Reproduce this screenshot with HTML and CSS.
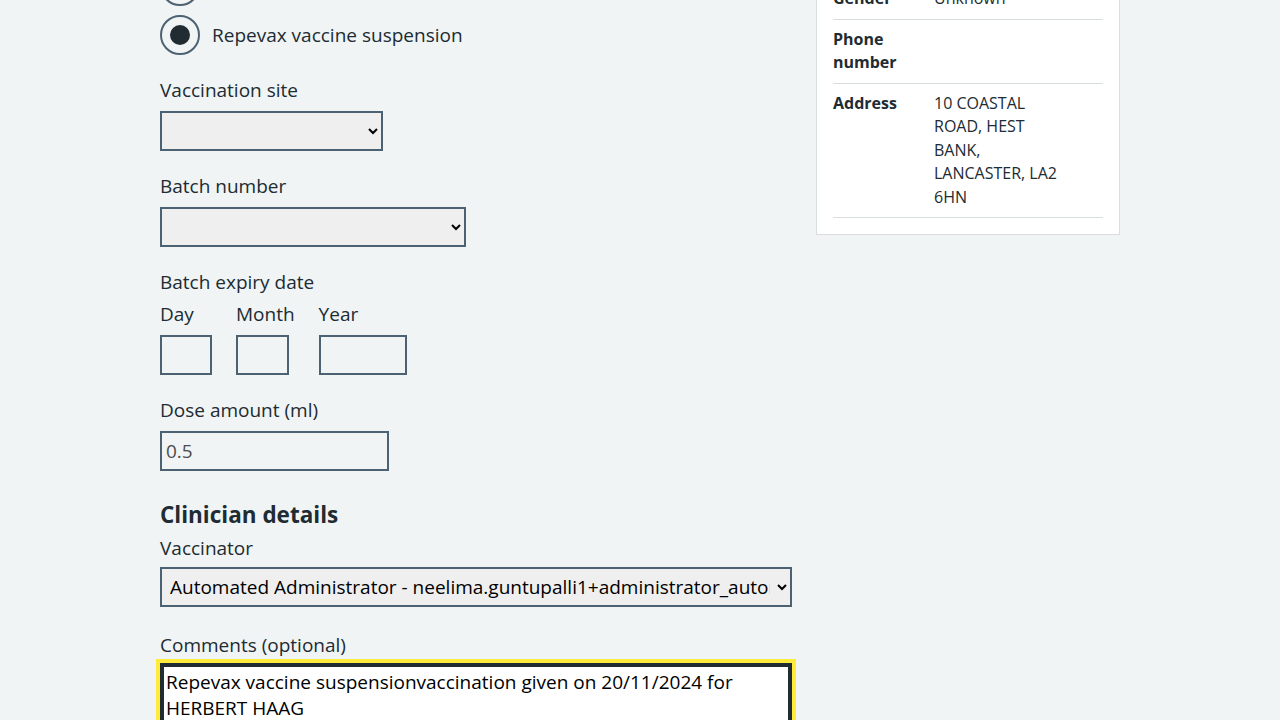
FILE: index.html
```html
<!DOCTYPE html>
<html lang="en">
<head>
<meta charset="utf-8">
<title>Record vaccination</title>
<link rel="stylesheet" href="styles.css">
</head>
<body>
<main class="container">
  <div class="main-col">
    <div class="form-group">
      <p class="label">Vaccine</p>
      <div class="radios">
        <label class="radio"><input class="radio-input" type="radio" name="vaccine"><span class="radio-label">Boostrix-IPV suspension for injection</span></label>
        <label class="radio"><input class="radio-input" type="radio" name="vaccine"><span class="radio-label">Adacel vaccine suspension</span></label>
        <label class="radio"><input class="radio-input" type="radio" name="vaccine" checked><span class="radio-label">Repevax vaccine suspension</span></label>
      </div>
    </div>

    <div class="form-group">
      <label class="label" for="site">Vaccination site</label>
      <select class="select select-site" id="site"><option></option></select>
    </div>

    <div class="form-group">
      <label class="label" for="batch">Batch number</label>
      <select class="select select-batch" id="batch"><option></option></select>
    </div>

    <div class="form-group">
      <p class="label label-legend">Batch expiry date</p>
      <div class="date-input">
        <div class="date-item">
          <label class="label" for="day">Day</label>
          <input class="input input-day" id="day" type="text">
        </div>
        <div class="date-item">
          <label class="label" for="month">Month</label>
          <input class="input input-month" id="month" type="text">
        </div>
        <div class="date-item">
          <label class="label" for="year">Year</label>
          <input class="input input-year" id="year" type="text">
        </div>
      </div>
    </div>

    <div class="form-group form-group-last">
      <label class="label" for="dose">Dose amount (ml)</label>
      <input class="input input-dose" id="dose" type="text" value="0.5">
    </div>

    <h2 class="heading">Clinician details</h2>
    <div class="form-group form-group-vaccinator">
      <label class="label label-tight" for="vaccinator">Vaccinator</label>
      <select class="select select-vaccinator" id="vaccinator">
        <option>Automated Administrator - neelima.guntupalli1+administrator_automation@nhs.net</option>
      </select>
    </div>

    <div class="form-group">
      <label class="label label-comments" for="comments">Comments (optional)</label>
      <textarea class="textarea" id="comments" rows="5">Repevax vaccine suspensionvaccination given on 20/11/2024 for HERBERT HAAG</textarea>
    </div>
  </div>

  <aside class="side-col">
    <div class="card">
      <dl class="summary">
        <div class="summary-row">
          <dt class="summary-key">Name</dt>
          <dd class="summary-value">HERBERT HAAG</dd>
        </div>
        <div class="summary-row">
          <dt class="summary-key">Age</dt>
          <dd class="summary-value">71</dd>
        </div>
        <div class="summary-row">
          <dt class="summary-key">Gender</dt>
          <dd class="summary-value">Unknown</dd>
        </div>
        <div class="summary-row">
          <dt class="summary-key">Phone number</dt>
          <dd class="summary-value"></dd>
        </div>
        <div class="summary-row">
          <dt class="summary-key">Address</dt>
          <dd class="summary-value">10 COASTAL ROAD, HEST BANK, LANCASTER, LA2 6HN</dd>
        </div>
      </dl>
    </div>
  </aside>
</main>
</body>
</html>
```

FILE: styles.css
```css
* {
  box-sizing: border-box;
}

body {
  margin: 0;
  background: #f0f4f5;
  color: #212b32;
  font-family: "Open Sans", "Noto Sans", sans-serif;
  font-size: 19px;
  line-height: 28px;
}

.container {
  width: 960px;
  margin: -119px auto 0;
  display: flex;
  align-items: flex-start;
  gap: 24px;
}

.main-col {
  width: 632px;
  flex: none;
}

.side-col {
  width: 304px;
  flex: none;
}

/* form */
.form-group {
  margin-bottom: 20px;
}

.form-group-last {
  margin-bottom: 28px;
}

.form-group-vaccinator {
  margin-bottom: 23px;
}

.label {
  display: block;
  margin: 0 0 8px;
  padding-top: 1px;
  height: 28px;
  font-size: 19px;
  line-height: 28px;
}

.label-legend {
  margin-bottom: 4px;
}

.label-tight {
  margin-bottom: 6px;
}

.label-comments {
  margin-bottom: 5px;
}

.heading {
  margin: 0 0 2px;
  font-size: 22.5px;
  line-height: 32px;
  font-weight: 700;
}

/* radios */
.radios {
  display: flex;
  flex-direction: column;
  gap: 9px;
}

.radio {
  display: flex;
  align-items: center;
  gap: 12px;
  min-height: 40px;
}

.radio-input {
  appearance: none;
  -webkit-appearance: none;
  width: 40px;
  height: 40px;
  margin: 0;
  border: 2px solid #4c6272;
  border-radius: 50%;
  background: transparent;
  display: grid;
  place-content: center;
  flex: none;
}

.radio-input:checked::before {
  content: "";
  display: block;
  width: 20px;
  height: 20px;
  border-radius: 50%;
  background: #212b32;
}

.radio-label {
  font-size: 19px;
  line-height: 28px;
}

/* selects & inputs */
.select {
  display: block;
  height: 40px;
  padding: 0 4px;
  border: 2px solid #4c6272;
  border-radius: 0;
  background-color: #efefef;
  color: #000;
  font-family: inherit;
  font-size: 19px;
}

.select-site {
  width: 223px;
}

.select-batch {
  width: 306px;
}

.select-vaccinator {
  width: 632px;
}

.input {
  display: block;
  height: 40px;
  padding: 4px;
  border: 2px solid #4c6272;
  border-radius: 0;
  background: transparent;
  color: #4c4c4c;
  font-family: inherit;
  font-size: 19px;
}

.date-input {
  display: flex;
}

.date-item {
  margin-right: 24px;
}

.input-day {
  width: 52px;
}

.input-month {
  width: 53px;
}

.input-year {
  width: 88px;
}

.input-dose {
  width: 229px;
}

.textarea {
  display: block;
  width: 632px;
  height: 140px;
  padding: 4px;
  border: 2px solid #212b32;
  border-radius: 0;
  box-shadow: inset 0 0 0 2px #212b32;
  outline: 4px solid #ffeb3b;
  background: #fff;
  color: #000;
  font-family: inherit;
  font-size: 19px;
  line-height: 26px;
  resize: vertical;
}

/* summary card */
.card {
  background: #fff;
  border: 1px solid #d8dde0;
  padding: 16px;
}

.summary {
  margin: 0;
  font-size: 16px;
  line-height: 23.5px;
}

.summary-row {
  display: flex;
  border-bottom: 1px solid #d8dde0;
}

.summary-key {
  width: 101px;
  flex: none;
  padding: 8px 24px 8px 0;
  font-weight: 700;
}

.summary-value {
  width: 132px;
  margin: 0;
  padding: 8px 0;
}
```
